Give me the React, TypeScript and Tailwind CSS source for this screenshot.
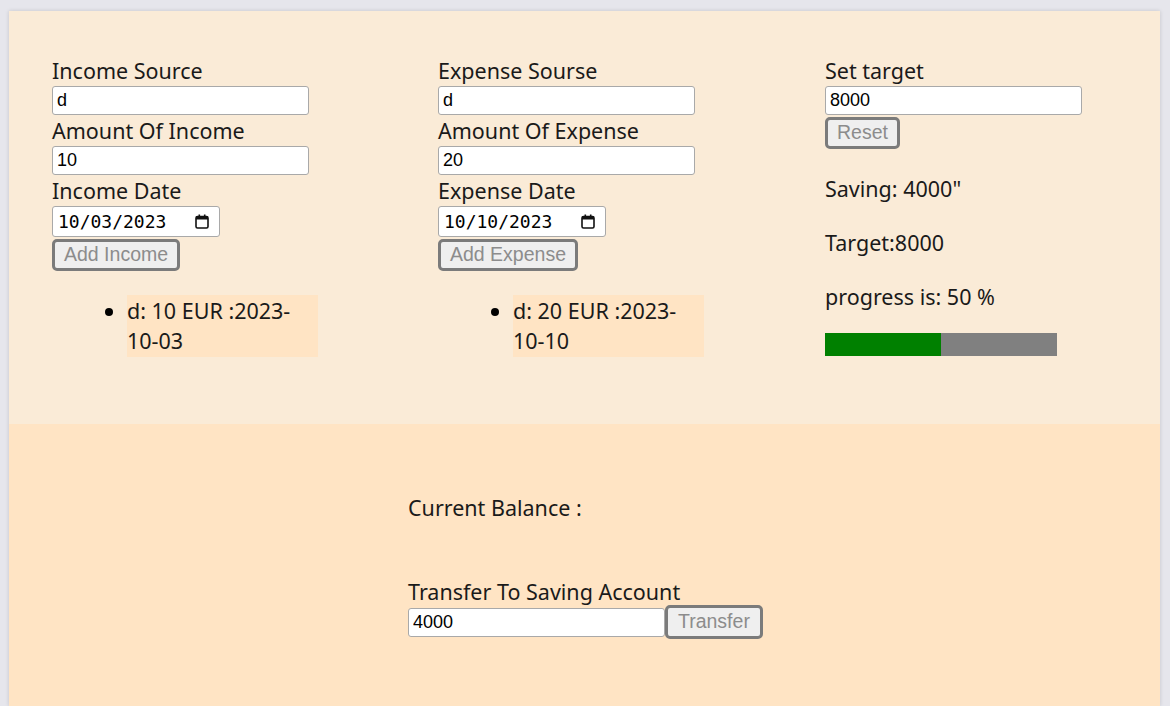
import React from "react";

const label = "block text-[21.5px] leading-[31px] text-[#1a1a1a] [font-family:'Noto_Sans',sans-serif]";
const field =
  "block h-[29px] w-[257px] rounded-[3px] border border-[#a9a9a9] bg-white px-[4px] text-[18px] text-black [font-family:'Liberation_Sans',Arial,sans-serif] outline-none";
const btn =
  "block h-[32px] rounded-[5px] border-[3px] border-[#7b7b7b] bg-[#efefef] px-[9px] text-[19.5px] leading-none text-[#8c8c8c] [font-family:'Liberation_Sans',Arial,sans-serif]";

function DateBox({ value }: { value: string }) {
  return (
    <div className="flex h-[31px] w-[168px] items-center justify-between rounded-[3px] border border-[#a9a9a9] bg-white pl-[5px] pr-[10px] text-[18px] text-black [font-family:'DejaVu_Sans_Mono',monospace]">
      <span>{value}</span>
      <svg width="14" height="15" viewBox="0 0 14 15" fill="none">
        <rect x="1" y="2.5" width="12" height="11.5" rx="1.5" stroke="#111" strokeWidth="1.6" />
        <rect x="1" y="2.5" width="12" height="3" fill="#111" />
        <rect x="3.5" y="0.5" width="1.6" height="3" fill="#111" />
        <rect x="8.9" y="0.5" width="1.6" height="3" fill="#111" />
      </svg>
    </div>
  );
}

function Entry({ text }: { text: string }) {
  return (
    <ul className="mt-[24px] list-disc pl-[75px] text-[21.5px] leading-[30px] text-[#1a1a1a] [font-family:'Noto_Sans',sans-serif]">
      <li className="w-[191px] bg-[#ffe4c4] py-[1px] marker:text-black">{text}</li>
    </ul>
  );
}

function Column({
  width,
  title,
  amountLabel,
  dateLabel,
  source,
  amount,
  date,
  button,
  entry,
}: {
  width: string;
  title: string;
  amountLabel: string;
  dateLabel: string;
  source: string;
  amount: string;
  date: string;
  button: string;
  entry: string;
}) {
  return (
    <div className={width}>
      <span className={label}>{title}</span>
      <input className={field} defaultValue={source} readOnly />
      <span className={label}>{amountLabel}</span>
      <input className={field} defaultValue={amount} readOnly />
      <span className={label}>{dateLabel}</span>
      <DateBox value={date} />
      <button className={btn + " mt-[2px]"}>{button}</button>
      <Entry text={entry} />
    </div>
  );
}

export default function App() {
  return (
    <div className="min-h-[706px] bg-[#e6e6ec] pl-[9px] pr-[10px] pt-[11px]">
      <div className="shadow-[0_0_4px_rgba(0,0,0,0.15)]">
        <section className="flex h-[413px] bg-[#faebd7] pl-[43px] pt-[44px]">
          <Column
            width="w-[386px]"
            title="Income Source"
            amountLabel="Amount Of Income"
            dateLabel="Income Date"
            source="d"
            amount="10"
            date="10/03/2023"
            button="Add Income"
            entry="d: 10 EUR :2023-10-03"
          />
          <Column
            width="w-[387px]"
            title="Expense Sourse"
            amountLabel="Amount Of Expense"
            dateLabel="Expense Date"
            source="d"
            amount="20"
            date="10/10/2023"
            button="Add Expense"
            entry="d: 20 EUR :2023-10-10"
          />
          <div className="w-[300px]">
            <span className={label}>Set target</span>
            <input className={field} defaultValue="8000" readOnly />
            <button className={btn + " mt-[2px]"}>Reset</button>
            <div className="mt-[24px] flex flex-col gap-[23px] text-[21.5px] leading-[31px] text-[#1a1a1a] [font-family:'Noto_Sans',sans-serif]">
              <p>Saving: 4000"</p>
              <p>Target:8000</p>
              <p>progress is: 50 %</p>
            </div>
            <div className="mt-[21px] flex h-[23px] w-[232px] bg-[#808080]">
              <div className="h-full w-1/2 bg-[#008000]" />
            </div>
          </div>
        </section>
        <section className="h-[282px] bg-[#ffe4c4] pl-[399px] pt-[68px] text-[21.5px] leading-[31px] text-[#1a1a1a] [font-family:'Noto_Sans',sans-serif]">
          <p>Current Balance :</p>
          <span className="mt-[53px] block">Transfer To Saving Account</span>
          <div className="-mt-[2px] flex items-center">
            <input className={field} defaultValue="4000" readOnly />
            <button className={btn + " h-[34px] px-[10px]"}>Transfer</button>
          </div>
        </section>
      </div>
    </div>
  );
}
